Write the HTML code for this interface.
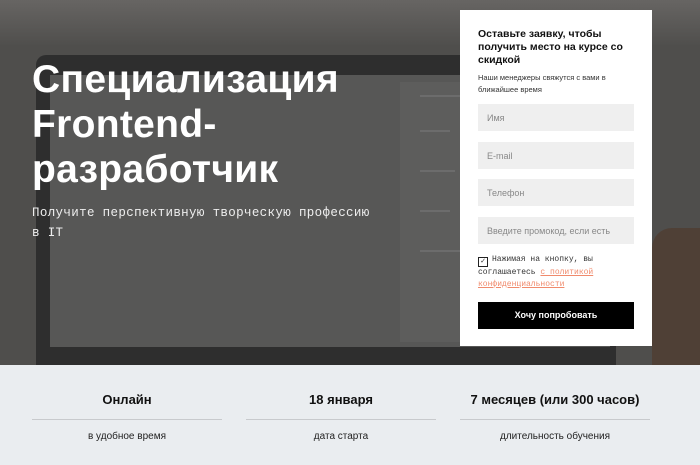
<!DOCTYPE html>
<html><head><meta charset="utf-8"><style>
*{margin:0;padding:0;box-sizing:border-box}
body{width:700px;height:465px;overflow:hidden;font-family:"Liberation Sans",sans-serif;background:#eaedf0;position:relative}
.hero{position:absolute;left:0;top:0;width:700px;height:365px;background:#4f4e4c;overflow:hidden}
.top{position:absolute;left:0;top:0;width:700px;height:45px;background:linear-gradient(#676563,#504f4d)}
.bezel{position:absolute;left:36px;top:55px;width:580px;height:330px;background:#2e2e2e;border-radius:10px}
.screen{position:absolute;left:50px;top:75px;width:560px;height:272px;background:#575756}
.side{position:absolute;left:400px;top:82px;width:80px;height:260px;background:#5d5d5c}
.cup{position:absolute;left:652px;top:228px;width:60px;height:140px;background:#4f4036;border-radius:20px 0 0 0}
.ln{position:absolute;height:2px;background:#6c6c6c}
h1{position:absolute;left:32px;top:57px;color:#fff;font-size:39px;line-height:45px;font-weight:bold;letter-spacing:.3px}
.sub{position:absolute;left:32px;top:203px;color:#eee;font-family:"Liberation Mono",monospace;font-size:12.5px;line-height:20px;letter-spacing:.35px;width:360px}
.form{position:absolute;left:460px;top:10px;width:192px;height:336px;background:#fff;padding:18px 18px}
.form h3{font-size:10.5px;line-height:13px;font-weight:bold;color:#111}
.form p{font-size:7.5px;line-height:11.5px;color:#333;margin-top:5px}
.in{height:27px;background:#efefef;margin-top:10.5px;font-size:9px;color:#888;padding:9px 9px;line-height:10px}
.in.first{margin-top:9px}
.chk{margin-top:10px;font-family:"Liberation Mono",monospace;font-size:8px;line-height:12.5px;color:#333}
.box{display:inline-block;width:10px;height:10px;border:1px solid #222;vertical-align:-2px;margin-right:4px;font-size:8px;line-height:8px;text-align:center}
.chk a{color:#f08a6c;text-decoration:underline}
.btn{margin-top:10px;height:27px;background:#000;color:#fff;font-size:9px;font-weight:bold;text-align:center;line-height:27px}
.col{position:absolute;top:392px;width:190px;text-align:center}
.col b{display:block;font-size:13px;color:#111;height:28px;border-bottom:1px solid #c8cacd}
.col span{display:block;font-size:10px;color:#222;margin-top:11px}
</style></head><body>
<div class="hero">
<div class="top"></div>
<div class="bezel"></div>
<div class="screen"></div>
<div class="side"></div>
<div class="cup"></div>
<div class="ln" style="left:420px;top:95px;width:40px"></div>
<div class="ln" style="left:420px;top:130px;width:30px"></div>
<div class="ln" style="left:420px;top:170px;width:35px"></div>
<div class="ln" style="left:420px;top:210px;width:30px"></div>
<div class="ln" style="left:420px;top:250px;width:40px"></div>
<h1>Специализация<br>Frontend-<br>разработчик</h1>
<div class="sub">Получите перспективную творческую профессию<br>в IT</div>
</div>
<div class="form">
<h3>Оставьте заявку, чтобы получить место на курсе со скидкой</h3>
<p>Наши менеджеры свяжутся с вами в ближайшее время</p>
<div class="in first">Имя</div>
<div class="in">E-mail</div>
<div class="in">Телефон</div>
<div class="in">Введите промокод, если есть</div>
<div class="chk"><span class="box">✓</span>Нажимая на кнопку, вы соглашаетесь <a>с политикой конфиденциальности</a></div>
<div class="btn">Хочу попробовать</div>
</div>
<div class="col" style="left:32px"><b>Онлайн</b><span>в удобное время</span></div>
<div class="col" style="left:246px"><b>18 января</b><span>дата старта</span></div>
<div class="col" style="left:460px"><b>7 месяцев (или 300 часов)</b><span>длительность обучения</span></div>
</body></html>
